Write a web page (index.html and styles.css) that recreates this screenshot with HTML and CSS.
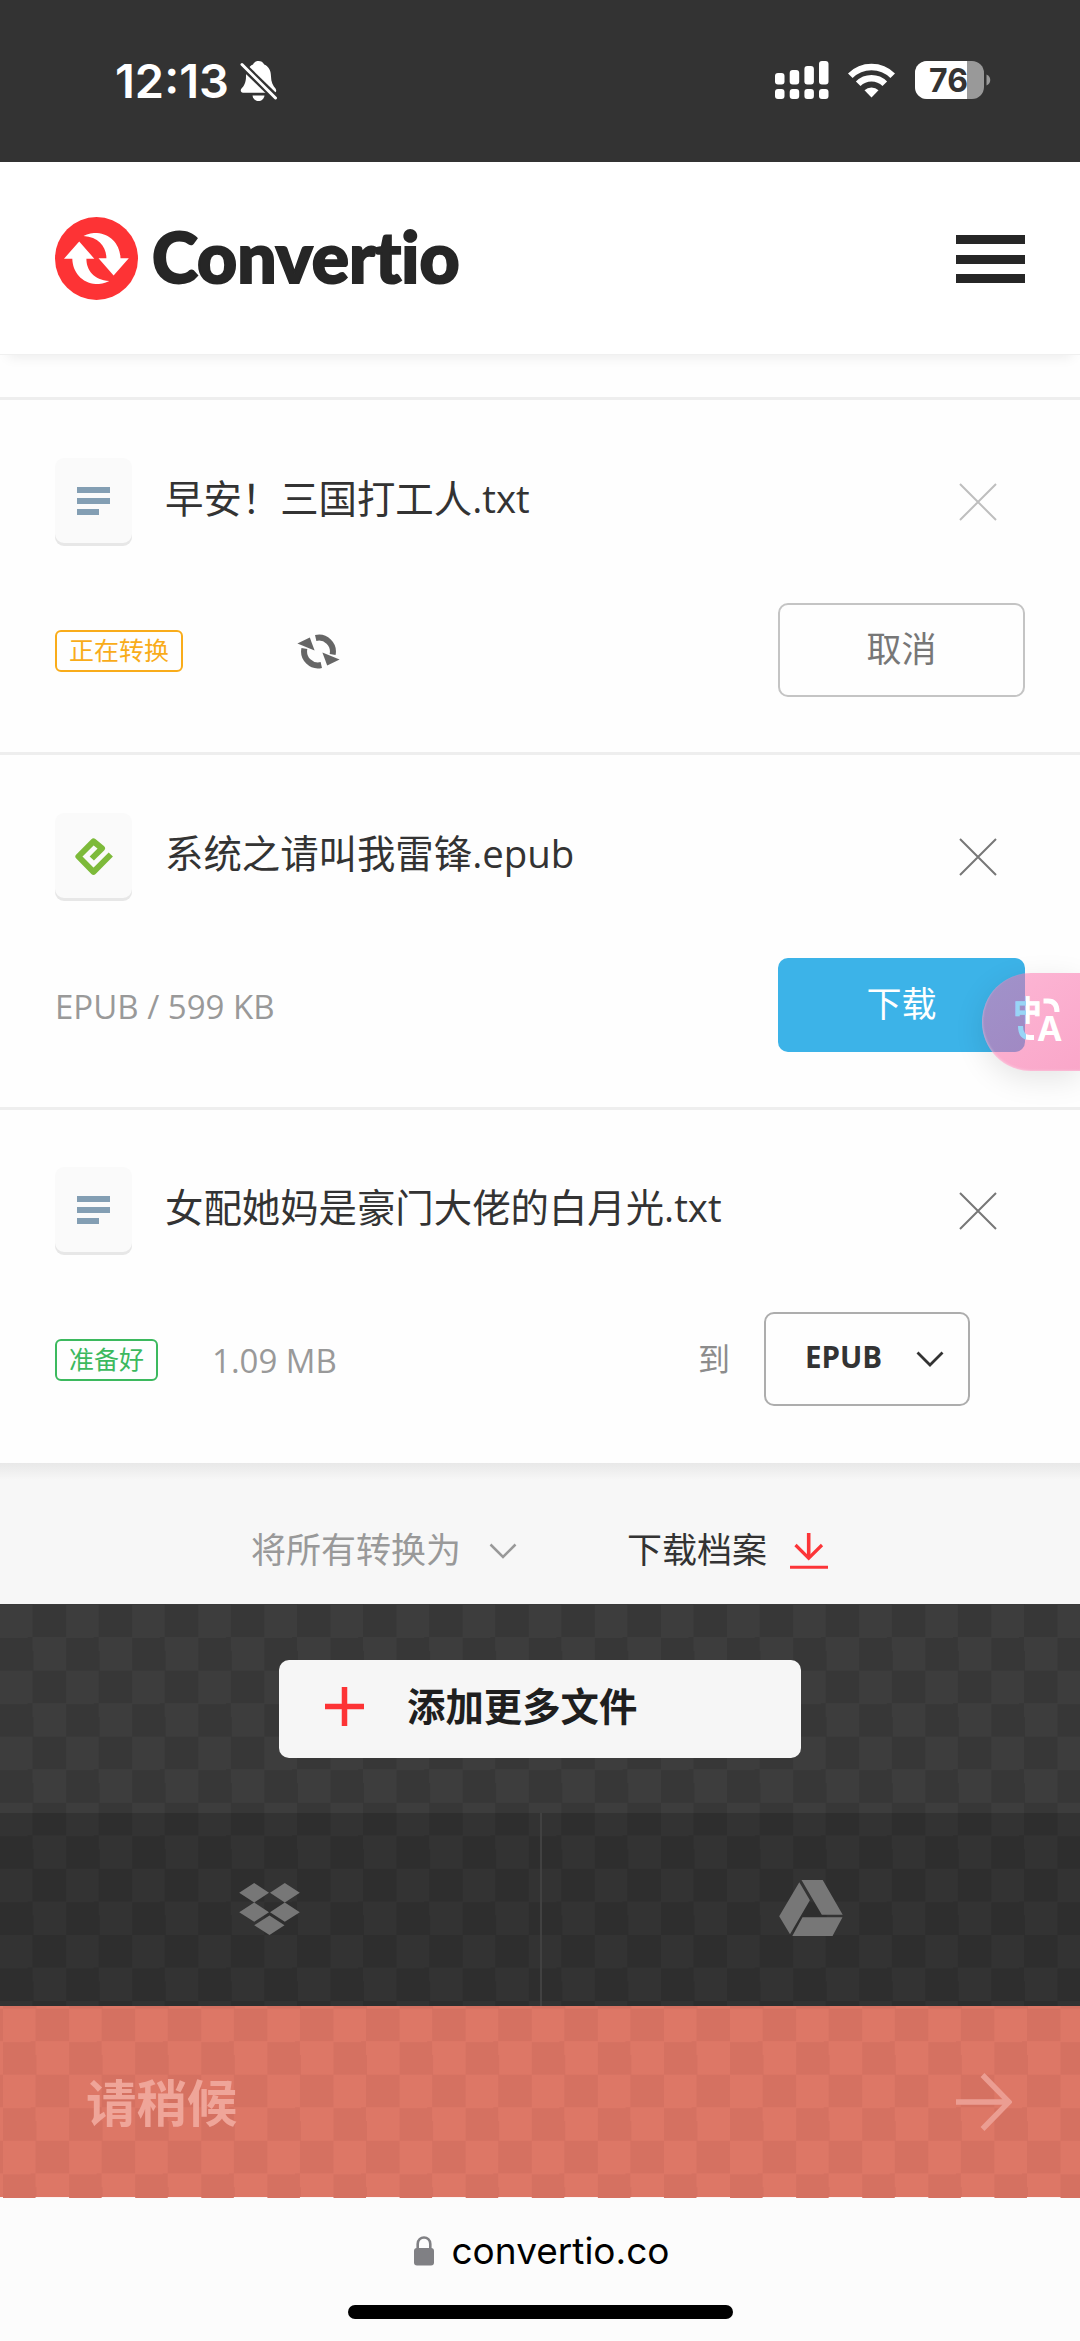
FILE: index.html
```html
<!DOCTYPE html>
<html lang="zh-CN">
<head>
<meta charset="utf-8">
<title>Convertio</title>
<link rel="stylesheet" href="styles.css">
</head>
<body>
<div class="status">
  <span class="clock">12:13</span>
  <svg class="bell" width="38" height="40" viewBox="0 0 38 40">
    <g fill="#fff"><path d="M13 3.5C14 1 16 0 18.500 0S23 1 24.200 3.500C29 5.500 31 10 31 15.500C31 21 33 24.500 35.500 27.500C37 30 36 31.700 34 31.700H3C.8 31.700 0 29.500 1.500 27.500C4 25 6 21.500 6 15.500C6 10 8.500 5.500 13 3.500Z"/><path d="M12.500 34.500H24.500C24 38 21.500 40 18.500 40S13 38 12.500 34.500Z"/></g>
    <path d="M1.500 3.500L36 37" stroke="#333" stroke-width="7.500"/>
    <path d="M2 3.500L35.500 37" stroke="#fff" stroke-width="3" stroke-linecap="round"/>
  </svg>
  <svg class="signal" width="54" height="38" viewBox="0 0 54 38" fill="#fff">
    <rect x="0" y="12" width="9.500" height="11.500" rx="3"/><rect x="14.700" y="9" width="9.500" height="14.500" rx="3"/><rect x="29.400" y="5" width="9.500" height="18.500" rx="3"/><rect x="44" y="0" width="9.500" height="23.500" rx="3"/>
    <rect x="0" y="28" width="9.500" height="10" rx="3"/><rect x="14.700" y="28" width="9.500" height="10" rx="3"/><rect x="29.400" y="28" width="9.500" height="10" rx="3"/><rect x="44" y="28" width="9.500" height="10" rx="3"/>
  </svg>
  <svg class="wifi" width="47" height="35" viewBox="0 0 47 35">
    <g fill="none" stroke="#fff" stroke-width="6.500"><path d="M2.300 12.700A30 30 0 0 1 44.700 12.700"/><path d="M10.200 20.800A18.800 18.800 0 0 1 36.800 20.800"/></g>
    <path d="M23.500 34.500L16.500 27.300A9.900 9.900 0 0 1 30.500 27.300Z" fill="#fff"/>
  </svg>
  <svg class="battery" width="76" height="38" viewBox="0 0 76 38">
    <rect width="69" height="38" rx="12" fill="#999"/>
    <path d="M12 0H52V38H12A12 12 0 0 1 0 26V12A12 12 0 0 1 12 0Z" fill="#fff"/>
    <path d="M71.500 13.500C76.500 15.500 76.500 22.500 71.500 24.500Z" fill="#999"/>
    <text x="33.500" y="31" text-anchor="middle" class="battery-text">76</text>
  </svg>
</div>

<header class="header">
  <svg width="83" height="83" viewBox="0 0 83 83">
    <circle cx="41.500" cy="41.500" r="41.500" fill="#fd3335"/>
    <g fill="#fff"><path id="arr" d="M28.500 19C33 16.500 38 16 42 16C56 17 65.200 28 65.500 41.300H73.800L58.600 58.500L43.500 41.300H51.400C51.400 30 44 20 28.500 19Z"/><use href="#arr" transform="rotate(180 41.400 41.500)"/></g>
  </svg>
  <span class="brand">Convertio</span>
  <div class="menu"><i></i><i></i><i></i></div>
</header>

<main class="list">
  <section class="row">
    <div class="row-head">
      <div class="ficon"><svg width="33" height="28" viewBox="0 0 33 28" fill="#839eb3"><path d="M0 0H33V6H0ZM0 11H33V17H0ZM0 22H22V28H0Z"/></svg></div>
      <span class="name">早安！三国打工人.txt</span>
      <svg class="close pale" width="38" height="38" viewBox="0 0 38 38"><path d="M1 1L37 37M37 1L1 37"/></svg>
    </div>
    <div class="row-foot">
      <span class="badge working">正在转换</span>
      <svg class="spin" width="44" height="36" viewBox="0 0 44 36">
        <g id="half"><path d="M18.700 4A14 14 0 0 1 35.600 20.500" fill="none" stroke="#666" stroke-width="6"/><path d="M25.400 18.600L42.600 25.600L30.200 31.500Z" fill="#666"/></g>
        <use href="#half" transform="rotate(180 21.500 17.500)"/>
      </svg>
      <span class="btn cancel">取消</span>
    </div>
  </section>
  <section class="row">
    <div class="row-head">
      <div class="ficon"><svg class="epub" width="39" height="39" viewBox="0 0 39 39"><path d="M17.800 21.500L28 11.300L19.500 4.400L4.400 19.500L19.500 34.800L36.800 17.500" fill="none" stroke="#7dba3a" stroke-width="6" stroke-linejoin="round"/></svg></div>
      <span class="name">系统之请叫我雷锋.epub</span>
      <svg class="close" width="38" height="38" viewBox="0 0 38 38"><path d="M1 1L37 37M37 1L1 37"/></svg>
    </div>
    <div class="row-foot">
      <span class="meta">EPUB / 599 KB</span>
      <span class="btn download">下载</span>
    </div>
  </section>
  <section class="row last">
    <div class="row-head">
      <div class="ficon"><svg width="33" height="28" viewBox="0 0 33 28" fill="#839eb3"><path d="M0 0H33V6H0ZM0 11H33V17H0ZM0 22H22V28H0Z"/></svg></div>
      <span class="name">女配她妈是豪门大佬的白月光.txt</span>
      <svg class="close" width="38" height="38" viewBox="0 0 38 38"><path d="M1 1L37 37M37 1L1 37"/></svg>
    </div>
    <div class="row-foot">
      <span class="badge ready">准备好</span>
      <span class="meta size">1.09 MB</span>
      <span class="to">到</span>
      <span class="select"><b>EPUB</b><svg width="28" height="16" viewBox="0 0 28 16"><path d="M1.500 1.500L14 14L26.500 1.500" fill="none" stroke="#333" stroke-width="2.800"/></svg></span>
    </div>
  </section>
</main>

<div class="tools">
  <span class="all">将所有转换为</span>
  <svg class="all-chev" width="28" height="16" viewBox="0 0 28 16"><path d="M1.500 1.500L14 14L26.500 1.500" fill="none" stroke="#999" stroke-width="2.500"/></svg>
  <span class="archive">下载档案</span>
  <svg class="archive-icon" width="38" height="36" viewBox="0 0 38 36" fill="none" stroke="#fc3538"><path d="M18.700 0V25" stroke-width="3.600"/><path d="M5.500 12L18.700 25.200L32 12" stroke-width="3.200"/><path d="M0 34.300H38" stroke-width="3"/></svg>
</div>

<div class="dark">
  <div class="add-wrap">
    <div class="add">
      <svg width="39" height="39" viewBox="0 0 39 39"><path d="M19.500 0V39M0 19.500H39" stroke="#fd3335" stroke-width="5.500"/></svg>
      <span>添加更多文件</span>
    </div>
  </div>
  <div class="clouds">
    <div class="cloud dropbox"><svg width="61" height="52" viewBox="0 0 61 52" fill="#777"><path d="M15.200 0L30 9.700L15.200 19.400L.2 9.700ZM45.800 0L60.800 9.700L45.800 19.400L31 9.700ZM15.200 19.400L30 29.200L15.200 38.800L.2 29.200ZM45.800 19.400L60.800 29.200L45.800 38.800L31 29.200ZM30.500 32.600L45.500 42.200L30.500 52L15.200 42.200Z"/></svg></div>
    <div class="cloud drive"><svg width="64" height="56" viewBox="0 0 64 56" fill="#777"><path d="M22.500 0H43.700L63.700 34.800H42.800ZM20.300 2.200L30.900 20.300L11 54.300L.2 36.300ZM23.500 37.300H63.500L53.500 56H13.300Z"/></svg></div>
  </div>
</div>

<div class="submit">
  <span>请稍候</span>
  <svg width="56" height="60" viewBox="0 0 56 60" fill="none" stroke="#eb9d92" stroke-width="5.500"><path d="M0 30H51M26.500 3L53 30L26.500 57" stroke-linejoin="miter"/></svg>
</div>

<footer class="browser">
  <div class="address">
    <svg width="20" height="30" viewBox="0 0 20 30"><rect y="12" width="20" height="17.500" rx="3" fill="#808084"/><path d="M3.700 13V8C3.700 -.7 16.300 -.7 16.300 8V13" fill="none" stroke="#808084" stroke-width="2.600"/></svg>
    <span>convertio.co</span>
  </div>
  <div class="home"></div>
</footer>

<div class="float">
  <svg width="98" height="98" viewBox="0 0 98 98">
    <defs><linearGradient id="tint" gradientUnits="userSpaceOnUse" x1="0" y1="0" x2="98" y2="0"><stop offset=".444" stop-color="#98d5f6"/><stop offset=".444" stop-color="#fff"/></linearGradient></defs>
    <text x="31.500" y="48" class="zh" fill="url(#tint)" stroke="url(#tint)">中</text>
    <text x="55" y="67.500" class="la" fill="#fff">A</text>
    <path d="M61.500 28H66Q75 28 75 39" fill="none" stroke="#fff" stroke-width="5"/>
    <path d="M38.500 53Q38.500 64.500 48 64.500H52" fill="none" stroke="url(#tint)" stroke-width="5"/>
  </svg>
</div>
</body>
</html>
```

FILE: styles.css
```css
* { box-sizing: border-box; }
body {
  margin: 0;
  width: 1080px;
  height: 2341px;
  position: relative;
  overflow: hidden;
  background: #fefefe;
  color: #333;
  font-family: "Open Sans", "Noto Sans CJK SC", sans-serif;
}
svg { display: block; flex: none; }
span { white-space: nowrap; }

/* Phone status bar */
.status {
  height: 162px;
  background: #333;
  display: flex;
  align-items: flex-start;
  padding: 61px 89px 0 115px;
}
.clock {
  font: 600 47px/40px Inter, sans-serif;
  color: #fff;
  width: 125px;
}
.signal { margin-left: auto; }
.wifi { margin: 2px 20px 0 19px; }
.battery-text { font: 700 32px Inter, sans-serif; fill: #333; }

/* Site header */
.header {
  height: 193px;
  padding: 0 55px;
  display: flex;
  align-items: center;
  background: #fff;
  border-bottom: 1px solid #f0f0f0;
  box-shadow: 0 10px 12px -8px rgba(0, 0, 0, .08);
}
.brand {
  font: 900 69.500px/84px Lato, sans-serif;
  font-variant-ligatures: none;
  -webkit-text-stroke: 2px #262626;
  color: #262626;
  margin: 0 0 4px 14px;
  letter-spacing: 0;
}
.menu { margin: 2px 0 0 auto; width: 69px; display: grid; gap: 10.500px; }
.menu i { height: 9px; background: #262626; }

/* File rows */
.list { padding-top: 42px; }
.row {
  height: 355px;
  border-top: 3px solid #eee;
  padding: 58px 55px 0;
}
.row.last { height: 356px; padding-top: 57px; }
.row-head { height: 88px; display: flex; align-items: center; }
.ficon {
  width: 77px;
  height: 88px;
  background: #fafafa;
  border-radius: 9px;
  box-shadow: inset 0 -3px #e7e7e7;
  display: grid;
  place-items: center;
}
.ficon svg { margin-bottom: 2px; }
.name {
  font-size: 38.400px;
  line-height: 60px;
  margin: 0 0 8px 33px;
}
.close { margin: 0 28px 0 auto; stroke: #777; stroke-width: 2; }
.close.pale { stroke: #bebebe; }
.row-foot { margin-top: 57px; height: 94px; display: flex; align-items: center; }
.badge {
  height: 42px;
  border: 2.500px solid;
  border-radius: 6px;
  padding: 0 12px;
  font-size: 25px;
  line-height: 37px;
  margin-top: 2px;
}
.working { color: #f9ac1a; }
.ready { color: #3cb95e; }
.spin { margin: 3px 0 0 114px; }
.btn {
  width: 247px;
  height: 94px;
  border-radius: 10px;
  margin-left: auto;
  text-align: center;
  font-size: 35px;
  line-height: 88px;
}
.cancel { border: 2.500px solid #c4c4c4; color: #777; }
.download { background: #3cb3e8; color: #fff; line-height: 91px; }
.meta { font-size: 33px; color: #999; margin-top: 2px; }
.size { margin-left: 54px; }
.to { margin: 0 0 5px auto; font-size: 32px; color: #8c8c8c; }
.select {
  width: 206px;
  height: 94px;
  border: 2.500px solid #adadad;
  border-radius: 10px;
  margin: 0 55px 0 34px;
  display: flex;
  align-items: center;
  padding: 0 24px 0 39px;
  justify-content: space-between;
}
.select b { font-size: 29.500px; margin-bottom: 6px; }
.select svg { margin-bottom: 1px; }

/* Bulk actions */
.tools {
  height: 141px;
  background: linear-gradient(#e8e8e8, #ededed 6px, #f7f7f7 17px);
  display: flex;
  align-items: flex-start;
  padding: 61px 0 0 251px;
  font-size: 35px;
  line-height: 51px;
}
.all { color: #999; }
.all-chev { margin: 19px 0 0 28px; }
.archive { margin-left: 110px; }
.archive-icon { margin: 9px 0 0 23px; }

/* Upload area with checkered backdrop */
.dark {
  background: conic-gradient(#373737 25%, #3d3d3d 0 50%, #373737 0 75%, #3d3d3d 0) 0 .5px / 66.100px 66.100px;
}
.add-wrap { height: 209px; padding-top: 56px; }
.add {
  width: 522px;
  height: 98px;
  margin: 0 auto;
  border-radius: 10px;
  background: #f6f6f6;
  display: flex;
  align-items: center;
  padding-left: 46px;
  color: #1f1f1f;
  font-weight: 600;
  font-size: 38.400px;
}
.add span { margin: 0 0 6px 43px; line-height: 60px; }
.add svg { margin-bottom: 5px; }
.clouds {
  height: 193px;
  background: rgba(0, 0, 0, .16);
  display: grid;
  grid-template-columns: 1fr 1fr;
}
.cloud { display: flex; justify-content: center; padding-top: 70px; }
.dropbox { padding-right: 2px; }
.cloud + .cloud { border-left: 2px solid #414141; padding-top: 67px; }

.submit {
  height: 192px;
  background:
    linear-gradient(90deg, transparent 50%, #fdf3f0 0) 3px 100% / 66.100px 1px repeat-x,
    conic-gradient(#d57161 25%, #dd7766 0 50%, #d57161 0 75%, #dd7766 0) 3px 2.600px / 66.100px 66.100px;
  display: flex;
  align-items: center;
  justify-content: space-between;
  padding: 0 68px 0 86px;
  color: #efa599;
  font-weight: 700;
  font-size: 50.400px;
}
.submit span { margin-bottom: 4px; }

/* Browser address area */
.browser { height: 143px; background: #fcfcfc; padding-top: 28px; }
.address {
  display: flex;
  justify-content: center;
  align-items: center;
  gap: 17px;
  height: 50px;
  padding-left: 4px;
  font: 400 37px/50px Inter, sans-serif;
  letter-spacing: 0;
  color: #000;
}
.home { width: 385px; height: 14px; border-radius: 7px; background: #000; margin: 29px auto 0; }

/* Translate handle pinned to the screen edge */
.float {
  position: absolute;
  left: 982px;
  top: 973px;
  width: 98px;
  height: 98px;
  border-radius: 49px 0 0 49px;
  background: linear-gradient(145deg, rgba(252, 118, 176, .52), rgba(246, 92, 156, .54));
  box-shadow: 0 8px 30px rgba(0, 0, 0, .1), inset 1px -1px 2px rgba(255, 255, 255, .25);
}
.zh { font: 700 28px "Noto Sans CJK SC", sans-serif; stroke-width: .8px; }
.la { font: 700 34px Inter, sans-serif; }
```
